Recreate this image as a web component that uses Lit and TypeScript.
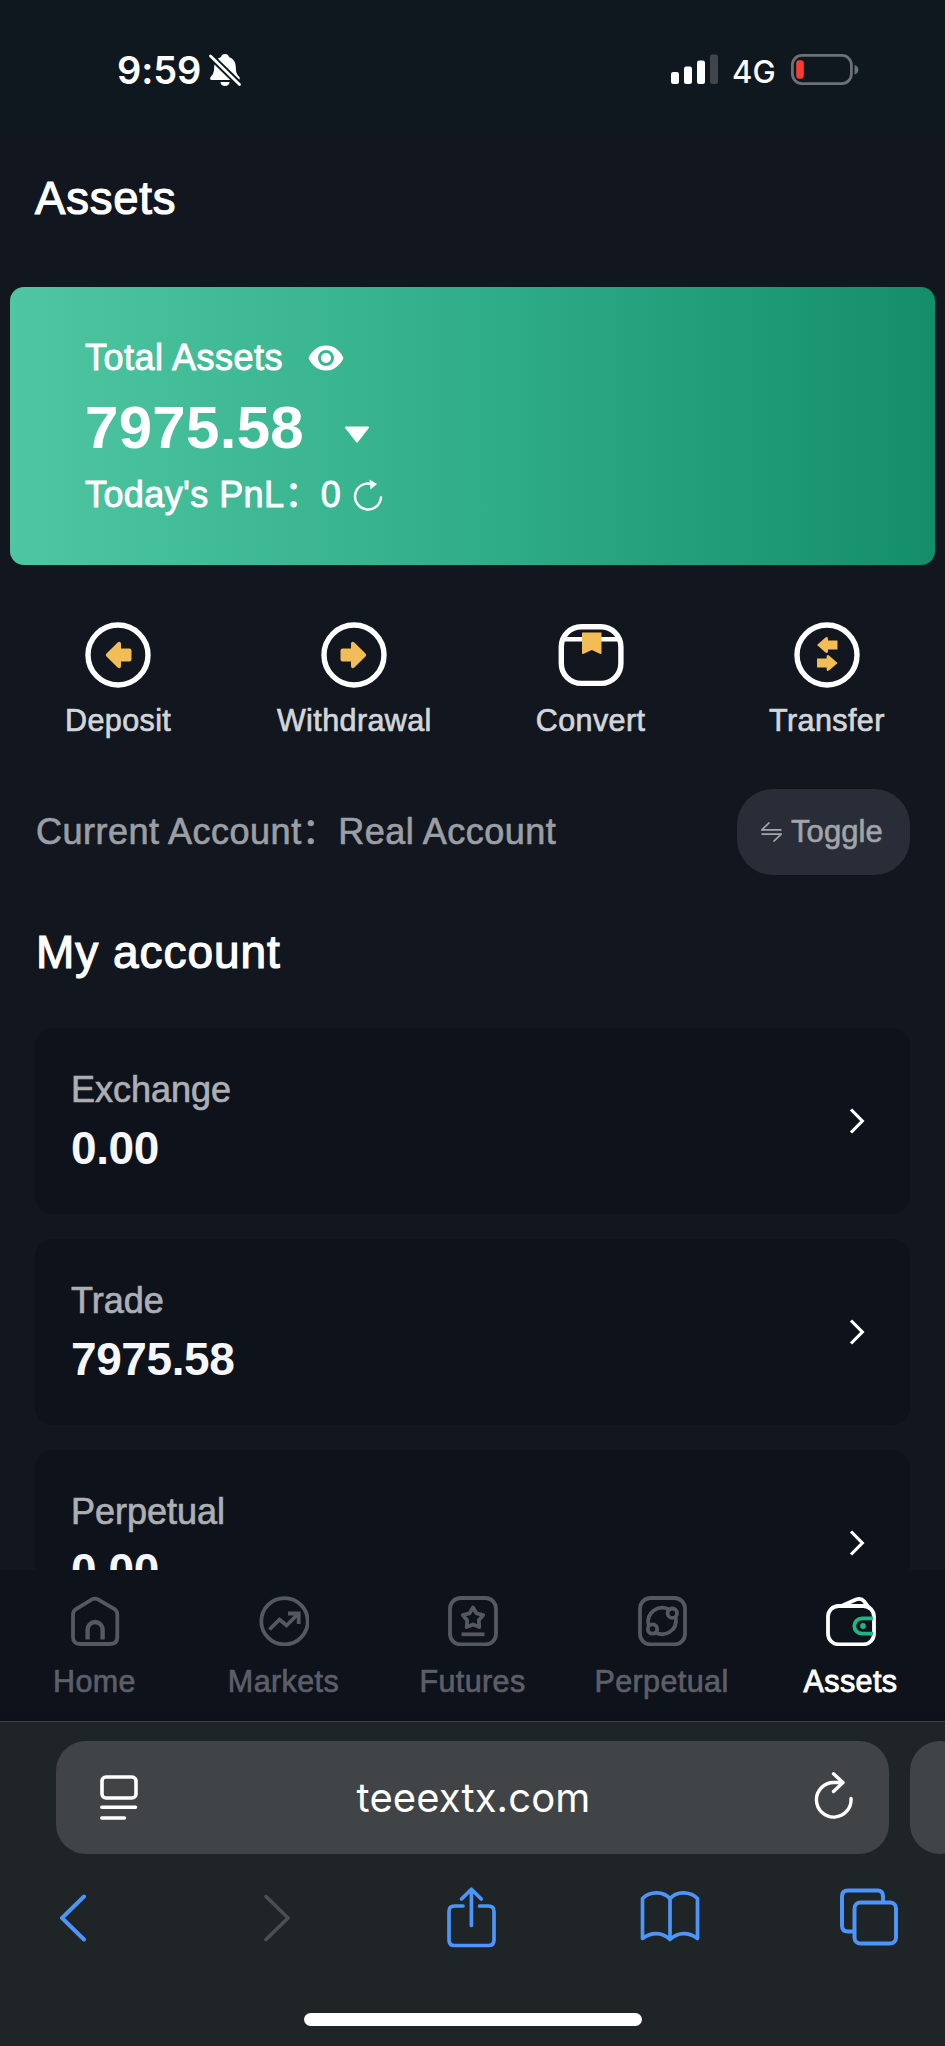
import { LitElement, html, css, svg } from "lit";
import { customElement, property } from "lit/decorators.js";

const GOLD = "#f2bd57";

const actions = [
  {
    label: "Deposit",
    icon: svg`<circle cx="33" cy="33" r="30" fill="none" stroke="#fff" stroke-width="5.4"/>
      <path d="M21.5 31.6 32.6 20.6Q35.8 18.6 36 22V26.5H44.5Q46.5 26.5 46.5 28.5V37.5Q46.5 39.5 44.5 39.5H36V44Q35.8 47.6 32.6 45.6L21.5 34.4Q20 33 21.5 31.6Z" fill=${GOLD}/>`,
  },
  {
    label: "Withdrawal",
    icon: svg`<circle cx="33" cy="33" r="30" fill="none" stroke="#fff" stroke-width="5.4"/>
      <path d="M44.5 31.6 33.4 20.6Q30.2 18.6 30 22V26.5H21.5Q19.5 26.5 19.5 28.5V37.5Q19.5 39.5 21.5 39.5H30V44Q30.2 47.6 33.4 45.6L44.5 34.4Q46 33 44.5 31.6Z" fill=${GOLD}/>`,
  },
  {
    label: "Convert",
    icon: svg`<rect x="3.3" y="4.8" width="59.6" height="56.6" rx="20" fill="none" stroke="#fff" stroke-width="5.4"/>
      <path d="M5 17.3H61" stroke="#fff" stroke-width="4.4"/>
      <path d="M24 10.5H43.5V31.5Q42.5 32.6 41.2 31.6L33.8 28 26.3 31.6Q24.8 32.6 24 31.5Z" fill=${GOLD}/>`,
  },
  {
    label: "Transfer",
    icon: svg`<circle cx="33" cy="33" r="30" fill="none" stroke="#fff" stroke-width="5.4"/>
      <path d="M23 23 31.5 15.4Q34 14 34 17V18.6H43.5V27.6H34V29Q34 32 31.5 30.6Z" fill=${GOLD}/>
      <path d="M43.6 41 35 33.4Q32.6 32 32.6 35V36.5H23V45.5H32.6V47Q32.6 50 35 48.6Z" fill=${GOLD}/>`,
  },
];

const accounts = [
  { name: "Exchange", value: "0.00" },
  { name: "Trade", value: "7975.58" },
  { name: "Perpetual", value: "0.00" },
];

const tabs = [
  {
    label: "Home",
    icon: svg`<path d="M3 18.5Q3 15 6 13L22 3.4Q25 1.8 28 3.4L44.5 13Q47.3 15 47.3 18.5V41Q47.3 48 40.3 48H10Q3 48 3 41Z"/>
      <path d="M17.6 43.5V33.5a7.5 7.5 0 0 1 15 0V43.5" stroke-width="4.4"/>`,
  },
  {
    label: "Markets",
    icon: svg`<circle cx="25.5" cy="25.3" r="23.2"/>
      <path d="M10.5 33.5 20.5 23.5 27.5 29.5 39 18M29 17.5H39.7V28"/>`,
  },
  {
    label: "Futures",
    icon: svg`<rect x="2" y="2" width="46" height="46.4" rx="10.5"/>
      <path d="M25 11.5 28.6 17.4 35.2 19 30.8 24.2 31.3 31 25 28.4 18.7 31 19.2 24.2 14.8 19 21.4 17.4Z" stroke-linejoin="round"/>
      <path d="M13.5 38.3H36.5"/>`,
  },
  {
    label: "Perpetual",
    icon: svg`<rect x="3" y="2" width="45" height="46.4" rx="10.5"/>
      <path d="M31.5 13.2C22 8.5 8.5 16 11.6 29M18.5 36.5C28 41.5 41 34.5 38.7 21.2"/>
      <circle cx="35.3" cy="17.2" r="4.7"/><circle cx="15.5" cy="33" r="4.7"/>`,
  },
  {
    label: "Assets",
    active: true,
    icon: svg`<rect x="2" y="10" width="46" height="38.3" rx="10.5"/>
      <path d="M16 9.8 30 3.6Q35 1.600 38 5.200L43 12"/>
      <path d="M47 22.300H36a7.700 7.700 0 0 0 0 15.400H47" stroke="#1db787"/>
      <circle cx="37" cy="30" r="2.900" fill="#1db787" stroke="none"/>`,
  },
];

@customElement("status-bar")
class StatusBar extends LitElement {
  static styles = css`
    :host { display: flex; height: 136px; box-sizing: border-box; padding: 0 86px 0 117px; background: #0f181f; color: #fff; font-family: Inter, "Liberation Sans", sans-serif; }
    .side { display: flex; align-items: center; height: 140px; }
    .right { margin-left: auto; }
    .time { font-size: 38px; font-weight: 600; letter-spacing: -0.1px; line-height: 50px; width: 92px; white-space: nowrap; }
    .net { font-size: 31px; font-weight: 500; line-height: 40px; margin: 3px 0 0 14px; width: 59px; letter-spacing: 0.1px; }
    svg { display: block; }
    .bars { margin-top: -2px; }
    .battery { margin-top: -2px; }
  `;
  render() {
    return html`
      <div class="side">
        <div class="time">9:59</div>
        <svg width="32" height="34" viewBox="0 0 32 34">
          <path d="M16 1c2.200 0 3.600 1.300 4 3 4.300 1.400 6.600 5 6.800 10 .1 5.500 1 7.500 3.400 9.700 1 1 .8 3.300-1 3.300H2.800c-1.800 0-2.300-2-1-3.300C4.200 21.400 5.100 19 5.200 14 5.400 9 7.800 5.400 12 4c.4-1.700 1.800-3 4-3Z" fill="#fff"/>
          <path d="M11.400 29h9.200c-.3 2.400-2 4-4.600 4s-4.300-1.600-4.600-4Z" fill="#fff"/>
          <path d="M1.500 3 30.500 31.500" stroke="#0f181f" stroke-width="6.600"/>
          <path d="M1.500 3 30.500 31.500" stroke="#fff" stroke-width="2.700" stroke-linecap="round"/>
        </svg>
      </div>
      <div class="side right">
        <svg class="bars" width="47" height="30" viewBox="0 0 47 30">
          <rect x="0" y="18" width="8" height="12" rx="2.200" fill="#fff"/>
          <rect x="13" y="12.500" width="8" height="17.500" rx="2.200" fill="#fff"/>
          <rect x="26" y="6.500" width="8" height="23.500" rx="2.200" fill="#fff"/>
          <rect x="39" y="0.500" width="8" height="29.500" rx="2.200" fill="#40464c"/>
        </svg>
        <div class="net">4G</div>
        <svg class="battery" width="68" height="31" viewBox="0 0 68 31">
          <rect x="1.400" y="1.400" width="59" height="28.200" rx="9.500" fill="none" stroke="#6c7177" stroke-width="2.800"/>
          <rect x="5.200" y="6.200" width="7.600" height="18.500" rx="3" fill="#fb3b2f"/>
          <path d="M63.500 11c5.200 1 5.200 8.500 0 9.500Z" fill="#6c7177"/>
        </svg>
      </div>
    `;
  }
}

@customElement("balance-card")
class BalanceCard extends LitElement {
  static styles = css`
    :host { display: block; box-sizing: border-box; height: 278px; margin: 0 10px; padding: 49px 0 0 75px; border-radius: 14px; background: linear-gradient(90deg, #4fc6a2, #2fad88 52%, #138e69); color: #fff; }
    .row { display: flex; align-items: center; white-space: nowrap; -webkit-text-stroke: 0.9px #fff; }
    svg { display: block; }
    .title { font-size: 36px; line-height: 44px; letter-spacing: 0.5px; height: 44px; }
    .title svg { margin-left: 25px; }
    .amount { font-size: 60px; font-weight: 700; line-height: 94px; height: 94px; letter-spacing: 0.3px; -webkit-text-stroke: 0; }
    .amount span { padding-top: 2px; }
    .amount svg { margin: 14px 0 0 40px; }
    .pnl { font-size: 36px; line-height: 41px; height: 41px; letter-spacing: 0.4px; }
    .pnl svg { margin-left: 12px; }
  `;
  render() {
    return html`
      <div class="row title">
        <span>Total Assets</span>
        <svg width="36" height="26" viewBox="0 0 36 26">
          <path fill="#fff" fill-rule="evenodd" d="M18 .5C27 .5 33 7 35.500 13 33 19 27 25.500 18 25.500S3 19 .5 13C3 7 9 .5 18 .5Zm0 4.500a8 8 0 1 0 0 16 8 8 0 0 0 0-16Z"/>
          <circle cx="18" cy="13" r="5" fill="#fff"/>
        </svg>
      </div>
      <div class="row amount">
        <span>7975.58</span>
        <svg width="26" height="17" viewBox="0 0 26 17"><path d="M2 .5H24Q26 .5 24.800 2L14 16Q13 17 12 16L1.200 2Q0 .5 2 .5Z" fill="#fff"/></svg>
      </div>
      <div class="row pnl">
        <span>Today's PnL：0</span>
        <svg width="30" height="32" viewBox="0 0 30 32">
          <path d="M28 18.500A13 13 0 1 1 19.500 5.300" fill="none" stroke="#fff" stroke-width="2.500" stroke-linecap="round"/>
          <path d="M16.500 .4 24 5 17.500 10.400Z" fill="#fff"/>
        </svg>
      </div>
    `;
  }
}

@customElement("account-card")
class AccountCard extends LitElement {
  @property() name = "";
  @property() value = "";
  static styles = css`
    :host { display: flex; flex: none; box-sizing: border-box; height: 186px; padding: 4px 45px 0 36px; align-items: center; justify-content: space-between; border-radius: 18px; background: #0d121b; }
    .name { font-size: 36px; line-height: 44px; color: #acafb4; -webkit-text-stroke: 0.7px #acafb4; }
    .value { font-size: 46px; line-height: 60px; font-weight: 700; color: #f5f7fb; letter-spacing: -0.4px; margin-top: 6px; }
    svg { display: block; margin-bottom: 4px; }
  `;
  render() {
    return html`
      <div><div class="name">${this.name}</div><div class="value">${this.value}</div></div>
      <svg width="16" height="28" viewBox="0 0 16 28"><path d="M2 2.500 13.300 14 2 25.500" fill="none" stroke="#fff" stroke-width="3.200"/></svg>
    `;
  }
}

@customElement("tab-bar")
class TabBar extends LitElement {
  static styles = css`
    :host { display: grid; grid-template-columns: repeat(5, 1fr); height: 151px; box-sizing: border-box; padding-top: 26px; background: linear-gradient(#0d121b 90%, #0b0f1a); }
    .tab { display: flex; flex-direction: column; align-items: center; color: #5c5f68; -webkit-text-stroke: 0.7px currentColor; font-size: 30.500px; line-height: 40px; letter-spacing: 0.4px; }
    .active { color: #fff; -webkit-text-stroke-width: 0.9px; }
    svg { display: block; fill: none; stroke: #555861; stroke-width: 3.800; margin-bottom: 15px; }
    .active svg { stroke: #fff; }
  `;
  render() {
    return tabs.map(
      (t) => html`<div class="tab ${t.active ? "active" : ""}">
        <svg width="50" height="50" viewBox="0 0 50 50">${t.icon}</svg>${t.label}
      </div>`
    );
  }
}

@customElement("browser-chrome")
class BrowserChrome extends LitElement {
  static styles = css`
    :host { display: block; box-sizing: border-box; height: 325px; border-top: 1px solid #3b3f41; background: #1f2427; overflow: hidden; }
    .address { display: flex; gap: 21px; padding: 19px 0 0 56px; }
    .field { flex: none; display: flex; align-items: center; justify-content: space-between; box-sizing: border-box; width: 833px; height: 113px; padding: 0 35px 0 43px; border-radius: 30px; background: #404447; color: #fff; font: 400 40px/50px Inter, "Liberation Sans", sans-serif; letter-spacing: 0.1px; }
    .field span { margin: 1px 6px 0 0; }
    .next { flex: none; width: 60px; height: 113px; border-radius: 30px; background: #404447; }
    .tools { display: grid; grid-template-columns: 204px 184px 194px 199.500px auto; align-items: center; height: 64px; margin-top: 31px; padding-left: 58px; }
    .indicator { width: 338px; height: 13px; border-radius: 7px; background: #fff; margin: 64px auto 0 304px; }
    svg { display: block; fill: none; stroke: #4b95fb; stroke-width: 4; stroke-linecap: round; stroke-linejoin: round; }
    .field svg { stroke: #fff; }
    .field .reload { margin-bottom: 5px; }
    .tools .dim { stroke: #4b4f52; }
    .tools .chevron { margin-top: 2px; }
  `;
  render() {
    return html`
      <div class="address">
        <div class="field">
          <svg width="40" height="46" viewBox="0 0 40 46"><rect x="3" y="2" width="34" height="21" rx="4" stroke-width="3.600"/><path d="M2.800 32.300H36.500M2.800 43H25.500" stroke-width="3.500"/></svg>
          <span>teeextx.com</span>
          <svg class="reload" width="40" height="48" viewBox="0 0 40 48"><path d="M37 27.500A17.300 17.300 0 1 1 19.700 11.500H28M19.500 2.800 29 11.500 19.500 20.500" stroke-width="3.400"/></svg>
        </div>
        <div class="next"></div>
      </div>
      <div class="tools">
        <svg class="chevron" width="30" height="48" viewBox="0 0 30 48"><path d="M26 2.500 4 24 26 45.500"/></svg>
        <svg class="chevron dim" width="30" height="48" viewBox="0 0 30 48"><path d="M4 2.500 26 24 4 45.500" stroke-width="3.600"/></svg>
        <svg width="50" height="62" viewBox="0 0 50 62"><path d="M17 20H8.500Q3 20 3 25.500V54Q3 59.500 8.500 59.500H42.500Q48 59.500 48 54V25.500Q48 20 42.500 20H33.500M25.400 39.500V4M15.500 13 25.400 3.200 35.300 13" stroke-width="3.700"/></svg>
        <svg width="60" height="54" viewBox="0 0 60 54"><path d="M30 9C24 1 10 1 2.500 8.500V48.500C11 42 22 41.500 30 49.500 38 41.500 49 42 57.500 48.500V8.500C50 1 36 1 30 9V49" stroke-width="3.700"/></svg>
        <svg width="58" height="58" viewBox="0 0 58 58"><rect x="14.500" y="14.500" width="41.500" height="41" rx="6"/><path d="M14 43.500H8Q2 43.500 2 37.500V8.500Q2 2.500 8 2.500H37.500Q43 2.500 43 8.500V14"/></svg>
      </div>
      <div class="indicator"></div>
    `;
  }
}

@customElement("app-root")
class AppRoot extends LitElement {
  static styles = css`
    :host { display: block; width: 945px; height: 2046px; overflow: hidden; background: #11161f; font-family: "Liberation Sans", "Noto Sans CJK SC", sans-serif; }
    .page { display: flex; flex-direction: column; height: 1570px; overflow: hidden; }
    .page > * { flex: none; }
    .title { height: 151px; box-sizing: border-box; padding: 38px 0 0 35px; font-size: 45.500px; line-height: 50px; letter-spacing: 0.800px; color: #fff; -webkit-text-stroke: 1.200px #fff; }
    .actions { display: grid; grid-template-columns: repeat(4, 1fr); margin-top: 57px; }
    .action { display: flex; flex-direction: column; align-items: center; gap: 12px; font-size: 30.500px; line-height: 40px; letter-spacing: 0.400px; color: #d2d6da; -webkit-text-stroke: 0.7px #d2d6da; }
    svg { display: block; }
    .account { display: flex; justify-content: space-between; align-items: center; margin-top: 49px; padding: 0 35px 0 36px; font-size: 36px; line-height: 44px; letter-spacing: 0.500px; color: #9b9ea3; -webkit-text-stroke: 0.7px #9b9ea3; }
    .toggle { display: flex; align-items: center; gap: 9px; box-sizing: border-box; width: 173px; height: 86px; padding-left: 24px; border-radius: 36px; background: #292d37; color: #a3a6ac; font-size: 31px; letter-spacing: 0.100px; }
    .heading { margin: 50px 0 0 36px; font-size: 46px; line-height: 54px; letter-spacing: 0.950px; color: #fff; -webkit-text-stroke: 1.200px #fff; }
    .list { display: flex; flex-direction: column; gap: 25px; margin: 49px 35px 0; }
  `;
  render() {
    return html`
      <div class="page">
        <status-bar></status-bar>
        <div class="title">Assets</div>
        <balance-card></balance-card>
        <div class="actions">
          ${actions.map(
            (a) => html`<div class="action"><svg width="66" height="66" viewBox="0 0 66 66">${a.icon}</svg>${a.label}</div>`
          )}
        </div>
        <div class="account">
          <span>Current Account：Real Account</span>
          <div class="toggle">
            <svg width="21" height="20" viewBox="0 0 21 20"><path d="M8.500 .5.8 7.800H20.500M12.500 19.500 20.200 12.200H.5" fill="none" stroke="#a3a6ac" stroke-width="1.700"/></svg>
            Toggle
          </div>
        </div>
        <div class="heading">My account</div>
        <div class="list">
          ${accounts.map((a) => html`<account-card .name=${a.name} .value=${a.value}></account-card>`)}
        </div>
      </div>
      <tab-bar></tab-bar>
      <browser-chrome></browser-chrome>
    `;
  }
}
